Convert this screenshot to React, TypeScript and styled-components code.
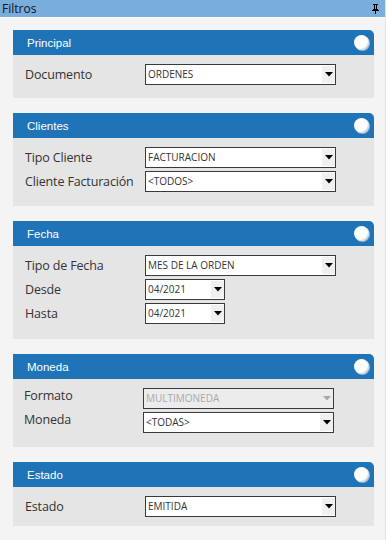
import React from 'react';
import styled, { createGlobalStyle } from 'styled-components';

type Field = {
    label: string;
    value: string;
    short?: boolean;
    disabled?: boolean;
};

type Section = {
    title: string;
    fields: Field[];
    bottom: number;
    shift?: boolean;
};

const sections: Section[] = [
    { title: 'Principal', bottom: 13, fields: [{ label: 'Documento', value: 'ORDENES' }] },
    {
        title: 'Clientes',
        bottom: 14,
        fields: [
            { label: 'Tipo Cliente', value: 'FACTURACION' },
            { label: 'Cliente Facturación', value: '<TODOS>' },
        ],
    },
    {
        title: 'Fecha',
        bottom: 15,
        fields: [
            { label: 'Tipo de Fecha', value: 'MES DE LA ORDEN' },
            { label: 'Desde', value: '04/2021', short: true },
            { label: 'Hasta', value: '04/2021', short: true },
        ],
    },
    {
        title: 'Moneda',
        bottom: 14,
        shift: true,
        fields: [
            { label: 'Formato', value: 'MULTIMONEDA', disabled: true },
            { label: 'Moneda', value: '<TODAS>' },
        ],
    },
    { title: 'Estado', bottom: 9, fields: [{ label: 'Estado', value: 'EMITIDA' }] },
];

const GlobalStyle = createGlobalStyle`
    html, body {
        margin: 0;
        padding: 0;
        background: #f4f4f4;
    }
    body {
        font-family: 'Open Sans', 'Liberation Sans', sans-serif;
    }
`;

const Pin = () => (
    <svg width="9" height="10" viewBox="0 0 9 10">
        <path d="M2 0h5v1h-1v4h1v1h1v1H1V6h1V5h1V1H2z" fill="#000" />
        <rect x="4" y="1" width="1" height="4" fill="#79addc" />
        <rect x="4" y="7" width="1" height="3" fill="#000" />
    </svg>
);

const Arrow = ({ disabled }: { disabled?: boolean }) => (
    <svg width="8" height="5" viewBox="0 0 8 5">
        <path d="M0 0h8L4 4.5z" fill={disabled ? '#a8a8a8' : '#000'} />
    </svg>
);

const App = () => {
    return (
        <Page>
            <GlobalStyle />
            <TopBar>
                <TopTitle>Filtros</TopTitle>
                <Pin />
            </TopBar>
            <Panels>
                {sections.map((section) => (
                    <Panel key={section.title}>
                        <PanelHeader>
                            <PanelTitle>{section.title}</PanelTitle>
                            <Toggle />
                        </PanelHeader>
                        <PanelBody bottom={section.bottom}>
                            {section.fields.map((field) => (
                                <Row key={field.label} shift={section.shift}>
                                    <Label shift={section.shift}>{field.label}</Label>
                                    <Select short={field.short} disabled={field.disabled}>
                                        <SelectText disabled={field.disabled}>{field.value}</SelectText>
                                        <ArrowBox disabled={field.disabled}>
                                            <Arrow disabled={field.disabled} />
                                        </ArrowBox>
                                    </Select>
                                </Row>
                            ))}
                        </PanelBody>
                    </Panel>
                ))}
            </Panels>
        </Page>
    );
};

const Page = styled.div`
    width: 386px;
    min-height: 540px;
    background: #f4f4f4;
    box-sizing: border-box;
    border-right: 1px solid #e2e2e2;
`;

const TopBar = styled.div`
    height: 17px;
    background: #79addc;
    display: flex;
    align-items: center;
    justify-content: space-between;
    padding: 0 5px 0 2px;
    border-bottom: 1px solid #fbfbfb;
`;

const TopTitle = styled.span`
    font-size: 12px;
    color: #111;
    line-height: 17px;
`;

const Panels = styled.div`
    display: flex;
    flex-direction: column;
    gap: 15px;
    padding: 12px 11px 14px 13px;
`;

const Panel = styled.section`
    width: 361px;
`;

const PanelHeader = styled.div`
    height: 25px;
    background: #1e74b6;
    border-top-right-radius: 5px;
    display: flex;
    align-items: center;
    justify-content: space-between;
    padding: 0 5px 0 14px;
`;

const PanelTitle = styled.span`
    font-family: 'Liberation Sans', sans-serif;
    font-size: 11.5px;
    color: #fff;
`;

const Toggle = styled.span`
    width: 15px;
    height: 15px;
    border-radius: 50%;
    background: #fff;
    box-shadow: 1px 1px 0 #9fb6cc, inset -1px -1px 1px #c9d6e2;
`;

const PanelBody = styled.div<{ bottom: number }>`
    background: #e5e5e5;
    padding: 9px 0 ${({ bottom }) => bottom}px 0;
    display: flex;
    flex-direction: column;
    gap: 3px;
`;

const Row = styled.div<{ shift?: boolean }>`
    display: grid;
    grid-template-columns: ${({ shift }) => (shift ? '119px' : '120px')} auto;
    align-items: center;
    padding-left: ${({ shift }) => (shift ? '11px' : '12px')};
`;

const Label = styled.span<{ shift?: boolean }>`
    font-size: 12.5px;
    color: #333;
    letter-spacing: -0.15px;
    white-space: nowrap;
    position: relative;
    top: ${({ shift }) => (shift ? '-3px' : '0')};
`;

const Select = styled.div<{ short?: boolean; disabled?: boolean }>`
    width: ${({ short }) => (short ? '80px' : '191px')};
    height: 21px;
    box-sizing: border-box;
    border: 1px solid #3a3a3a;
    background: ${({ disabled }) => (disabled ? '#ececec' : '#fff')};
    display: flex;
    align-items: stretch;
`;

const SelectText = styled.span<{ disabled?: boolean }>`
    flex: 1;
    font-size: 10px;
    line-height: 19px;
    padding-left: 2px;
    color: ${({ disabled }) => (disabled ? '#a9a9a9' : '#333')};
    white-space: nowrap;
    overflow: hidden;
`;

const ArrowBox = styled.span<{ disabled?: boolean }>`
    width: 13px;
    margin: 1px 0;
    background: ${({ disabled }) => (disabled ? '#ececec' : '#f0f0f0')};
    display: flex;
    align-items: center;
    justify-content: center;
`;

export default App;
